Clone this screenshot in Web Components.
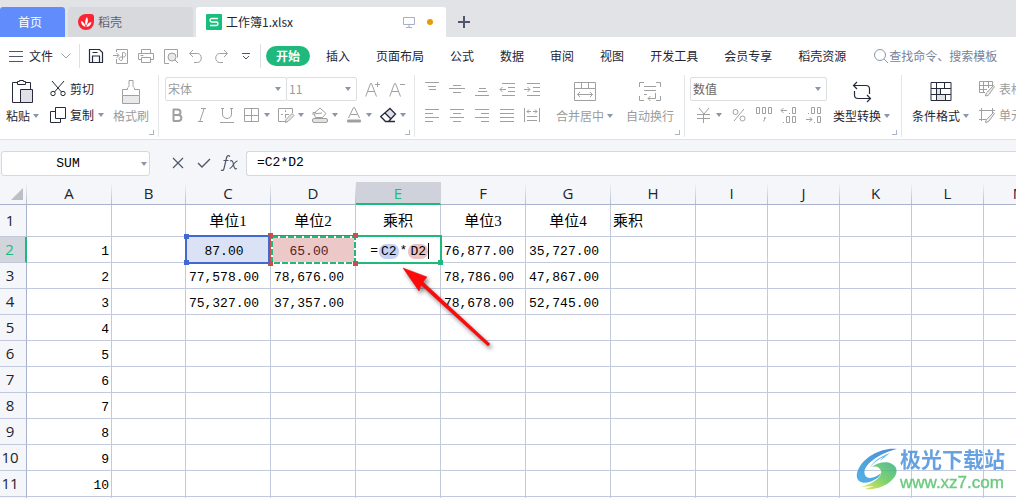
<!DOCTYPE html>
<html lang="zh-CN">
<head>
<meta charset="utf-8">
<title>工作簿1.xlsx</title>
<style>
html, body { margin: 0; height: 100%; }
body { font: 12px/16px "Noto Sans CJK SC", sans-serif; color: #1f2633; background: #fff; overflow: hidden; }
spreadsheet-app { height: 100%; }
</style>
</head>
<body>
<spreadsheet-app></spreadsheet-app>

<script>
const GREY = '#a0a0a0', DARK = '#252b3b', MID = '#4d566b';
const line = (d, c = GREY, w = 1) => `<path d="${d}" fill="none" stroke="${c}" stroke-width="${w}"/>`;
/* name: [width, height, markup] */
const ICONS = {
  menu: [16, 16, line('M1 3.5h14M1 8.5h14M1 13.5h14', MID)],
  chevron: [10, 8, line('M.5 1.5l4.500 4.500 4.500-4.500', '#9aa0a8')],
  caret: [6, 4, '<path d="M0 0h6L3 4z" fill="#8a96ab"/>'],
  save: [16, 16, line('M1.500 1.500h10l3 3v10h-13zM4.500 14v-6h7v6M4.500 4.500h5', DARK, 1.2)],
  exportPdf: [16, 16, line('M3.500 4V1.500h11v14h-11V11M0 7.500h5.500M3.500 5l2.500 2.500L3.500 10M9.500 10V4.500h1c3 0 3 4.500 0 4.500H8c-2.500 0-2.500 3.500 0 3.500 1.500 0 1.500-1 1.500-2.500')],
  print: [16, 16, line('M3.500 5V1.500h9V5M3.500 11.500h-3v-6h15v6h-3M3.500 9.500h9v5h-9zM2.500 7.500h3')],
  preview: [16, 16, line('M6 15.500H1.500v-14h13v8') + '<circle cx="9" cy="9" r="4" fill="#e8e9eb" stroke="#a0a0a0"/>' + line('M12 12l3 3')],
  undo: [16, 16, line('M5 2L1.500 5.500 5 9M2 5.500h7.500c5 0 5 9 0 9H6')],
  redo: [16, 16, line('M11 2l3.500 3.500L11 9M14 5.500H6.500c-5 0-5 9 0 9H10')],
  more: [16, 16, line('M4 5.500h8M5 8l3 3 3-3', MID)],
  search: [16, 16, '<circle cx="7" cy="7" r="5.500" fill="none" stroke="#8d96aa"/>' + line('M11 11l4 4', '#8d96aa')],
  monitor: [12, 12, line('M.5 1.500h11v7H.5zM6 9v2M3 11.500h6', '#a5b0c8')],
  plus: [12, 12, line('M6 0v12M0 6h12', MID, 2)],
  docer: [16, 16, '<path d="M8 0h5a3 3 0 0 1 3 3v5a8 8 0 1 1-8-8z" fill="#fb2433"/><path d="M8 12C6.500 8.500 7 5.500 9 3c1.500 3 1 6-1 9zM7.500 13C4.500 12 3 10 3 7c2.500.8 4.200 3 4.500 6zM8.500 13c.7-3 2.200-4.500 5-5-.5 3-2.200 4.500-5 5z" fill="#fff"/>'],
  sheet: [16, 16, '<rect width="16" height="16" rx="1" fill="#18bf7c"/><path d="M12 4.500H5.500c-2 0-2 3.500 0 3.500h5c2 0 2 3.500 0 3.500H4" fill="none" stroke="#fff" stroke-width="1.300"/>'],
  paste: [22, 24, line('M5 2.500H.5v20H9M14 2.500h4.500V10', DARK) + line('M5.500 4.500v-3h2V.5h4v1h2v3z', DARK) + '<path d="M8.500 9.500h12v13h-12z" fill="#dfe1e6" stroke="#252b3b"/>'],
  cut: [16, 16, line('M2 0l9.500 11M14 0L4.500 11', DARK) + '<circle cx="3" cy="12.500" r="2.200" fill="none" stroke="#252b3b"/><circle cx="13" cy="12.500" r="2.200" fill="none" stroke="#252b3b"/>'],
  copy: [16, 16, line('M5.500 11.500v-11h10v11z', DARK) + line('M5 4.500H.5v11h10V12', DARK)],
  painter: [18, 24, line('M.5 15V9.500h5V8c1.500-1 1.500-2 1.500-3.500V.5h4v4c0 1.500 0 2.500 1.500 3.500v1.500h5V15') + '<path d="M.5 15.500h17v8H.5z" fill="#e9e9ea" stroke="#a0a0a0"/>'],
  fontUp: [16, 16, line('M.7 15.500L5.500 2.500h1l5 13M2.500 10.500h7') + line('M12.500 1v5M10 3.500h5')],
  fontDown: [16, 16, line('M.7 15.500L5.500 2.500h1l5 13M2.500 10.500h7') + line('M11 3.500h5')],
  bold: [16, 16, line('M4 2.500h4.500c4 0 4 5.500 0 5.500H4m0 0h5c4.500 0 4.500 6 0 6H4M4.500 2v12', GREY, 2)],
  italic: [16, 16, line('M7 1.500h5M4 14.500h5M10 2L6 14')],
  underline: [16, 16, line('M3.500 1v6c0 6 9 6 9 0V1M1 15.500h14M2 1.500h3M11 1.500h3')],
  borders: [16, 16, line('M.5 1.500h14v13H.5zM7.500 2v12M1 8.500h13')],
  borderPen: [16, 16, line('M8 14.500H.5v-13h14V6M7.500 3v2M7.500 7v4M3 7.500h2M7 7.500h4') + '<path d="M14 6.500l2 2-6 6-2.500 1 .5-3z" fill="#e8e8e8" stroke="#a0a0a0"/>'],
  fill: [16, 16, line('M3 5.500L8 1l6 5.500-3.500 4h-7L2 7l8-1M1 8V5.500h3') + '<rect x=".5" y="11.500" width="15" height="4" rx="1.500" fill="#e2e2e2" stroke="#a0a0a0"/>'],
  fontColor: [16, 16, line('M2.500 11L7.500 .5h1L13.500 11M4.500 7.500h7') + '<rect x="1" y="12.500" width="14" height="3" rx="1" fill="#a0a0a0"/>'],
  eraser: [16, 16, '<path d="M10 1.500l5.500 5.500-5 5-5.500-5.500z" fill="#dfe1e8"/>' + line('M10 1.500l5.500 5.500-7 7.500h-3L.7 9.500zM5 6l5.500 5.500M6 14.500h9', DARK, 1.3)],
  alignTop: [16, 16, line('M1 1.500h14M4 5.500h8M5 8.500h7')],
  alignMid: [16, 16, line('M4 4.500h8M0 7.500h16M4 11.500h8')],
  alignBottom: [16, 16, line('M5 7.500h7M4 10.500h9M1 14.500h14')],
  outdent: [16, 16, line('M3 2.500h13M9 6.500h7M9 10.500h7M3 14.500h13M1 8.500h6M3.500 6L1 8.500 3.500 11')],
  indent: [16, 16, line('M3 2.500h13M9 6.500h7M9 10.500h7M3 14.500h13M0 8.500h6M3.500 6L6 8.500 3.500 11')],
  left: [16, 16, line('M1 2.500h14M1 6.500h8M1 10.500h14M1 14.500h8')],
  center: [16, 16, line('M1 2.500h14M4 6.500h8M1 10.500h14M4 14.500h8')],
  right: [16, 16, line('M1 2.500h14M7 6.500h8M1 10.500h14M7 14.500h8')],
  justify: [16, 16, line('M1 2.500h14M1 6.500h14M1 10.500h14M1 14.500h14')],
  distribute: [16, 16, line('M.5 1v14M15.500 1v14M3 9.500h10M3 13.500h10M3 4.500h4M9 4.500h4M5 2.500L3 4.500l2 2M11 2.500l2 2-2 2')],
  merge: [22, 20, line('M.5.500h21v18H.5zM0 6.500h22M7.500 1v5M14.500 1v5M3.500 12.500h15M6 10l-2.500 2.500L6 15M16 10l2.500 2.500L16 15')],
  wrap: [22, 20, line('M5 .5H.5V5M17 .5h4.500V5M5 18.500H.5V14M17 18.500h4.500V14M5 4.500h12M5 8.500h12M5 12.500h3M16.500 11v5.500H9M11.500 14L9 16.500l2.500 2.500')],
  yen: [16, 16, line('M3 1l5 6 5-6M1 7.500h13M1 11.500h13M7.500 7v9')],
  percent: [16, 16, line('M13 2L3 14') + '<circle cx="4.500" cy="5" r="2.500" fill="none" stroke="#a0a0a0"/><circle cx="11.500" cy="11.500" r="2.500" fill="none" stroke="#a0a0a0"/>'],
  thousands: [16, 16, line('M.5.500h3v6h-3zM6.500.500h3v6h-3zM12.500.500h3v6h-3zM8.500 10.500v2l-1 2M8 11h2')],
  decMore: [16, 16, line('M0 3.500h6M2.500 1L0 3.500 2.500 6M8 6.500h1M11.500.500h3v6h-3zM2 15.500h1M5.500 9.500h3v6h-3zM11.500 9.500h3v6h-3z')],
  decLess: [16, 16, line('M2 6.500h1M5.500.500h3v6h-3zM11.500.500h3v6h-3zM0 12.500h6M3.500 10l2.500 2.500L3.500 15M8 15.500h1M11.500 9.500h3v6h-3z')],
  convert: [20, 22, line('M5 1L1.500 4.500 5 8M2 4.500h12q3.500 0 3.500 3.500v5M15 14l3.500 3.500L15 21M18 17.500H6q-3.500 0-3.500-3.500V10', DARK, 1.2)],
  condFormat: [22, 20, '<path d="M6 7h4v6H6zM6 13h9v6H6z" fill="#dfe1e6"/>' + line('M1 .5h20v18H1zM1 6.500h20M1 12.500h20M6.500 .5v18M14.500 .5v6M10.500 6.500v6M15.500 12.500v6', DARK)],
  tableStyle: [16, 16, line('M6 11.500H.5v-11h13V5M1 4.500h12M1 8.500h7M4.500 1v10M9.500 1v6') + '<path d="M14.500 4.500l1 1-5.500 8c-1 1.500-3 1.500-4 1 1.500-.5.500-2.500 2.500-3.500z" fill="#eee" stroke="#a0a0a0"/>'],
  cellStyle: [16, 16, line('M0 3.500h16M2.500 1v13M13.500 1v5M0 12.500h7') + '<path d="M14.500 5.500l1 1-5.500 7.500c-1 1.500-3 1.500-4 1 1.500-.5.500-2.500 2.500-3.500z" fill="#eee" stroke="#a0a0a0"/>'],
  cancel: [14, 14, line('M2 2l10 10M12 2L2 12', MID, 1.2)],
  accept: [14, 14, line('M1 7l4 4 8-8', MID, 1.4)],
  fx: [18, 18, line('M9 2.500C7 .5 6 2 5.500 4L3 14.500C2.500 16.500 1.500 17 0 16M2.500 6.500h5M9 7c2-1 3 0 3.500 3.500S14 15.500 16 14.500M16.500 7C13.500 7 11 14.500 8.500 14.500', MID, 1.2)],
};

function define(name, css, html, setup) {
  const tpl = document.createElement('template');
  tpl.innerHTML = `<style>*{box-sizing:border-box}${css}</style>${html}`;
  customElements.define(name, class extends HTMLElement {
    connectedCallback() {
      if (this.shadowRoot) return;
      this.attachShadow({ mode: 'open' }).append(tpl.content.cloneNode(true));
      if (setup) setup(this, this.shadowRoot);
    }
  });
}

const BUTTON = 'button{display:flex;align-items:center;margin:0;padding:0;border:0;background:none;font:inherit;color:inherit;white-space:nowrap}';

define('ui-icon', ':host{display:block;flex:none}svg{display:block;overflow:visible}', '', (el, root) => {
  const [w, h, body] = ICONS[el.getAttribute('name')];
  root.innerHTML += `<svg width="${w}" height="${h}" viewBox="0 0 ${w} ${h}" aria-hidden="true">${body}</svg>`;
});

/* small button: icon, optional text, optional drop-down arrow */
define('tool-button', `:host{display:block;flex:none}${BUTTON}button{gap:4px;height:16px}`,
  '<button type="button"><slot></slot></button>', (el, root) => {
    const b = root.querySelector('button');
    b.setAttribute('aria-label', el.getAttribute('label') || el.textContent);
    b.insertAdjacentHTML('afterbegin', `<ui-icon name="${el.getAttribute('icon')}"></ui-icon>`);
    if (el.hasAttribute('drop')) b.insertAdjacentHTML('beforeend', '<ui-icon name="caret"></ui-icon>');
  });

/* tall button: icon above its caption */
define('big-button', `:host{display:block;flex:none;padding-top:3px}${BUTTON}
  button{flex-direction:column;gap:4px}.pic{display:flex;height:24px;align-items:center}
  .cap{display:flex;align-items:center;gap:3px}`,
  '<button type="button"><span class="pic"></span><span class="cap"><slot></slot></span></button>', (el, root) => {
    root.querySelector('.pic').innerHTML = `<ui-icon name="${el.getAttribute('icon')}"></ui-icon>`;
    if (el.hasAttribute('drop')) root.querySelector('.cap').insertAdjacentHTML('beforeend', '<ui-icon name="caret"></ui-icon>');
  });

define('drop-select', `:host{display:block;position:relative;flex:none}
  select{appearance:none;display:block;width:100%;height:24px;margin:0;padding:0 16px 0 2px;border:1px solid #dcdee2;border-radius:2px;background:#fff;font:inherit;color:inherit}
  ui-icon{position:absolute;right:6px;top:10px;pointer-events:none}`,
  '<select><option></option></select><ui-icon name="caret"></ui-icon>', (el, root) => {
    root.querySelector('select').setAttribute('aria-label', el.getAttribute('label'));
    root.querySelector('option').textContent = el.getAttribute('value');
  });

define('doc-tab', `:host{display:block;flex:none;height:30px;background:#d7d9dd;border-radius:3px 3px 0 0;color:#5a6274}
  :host([kind=home]){background:#608dfb;color:#fff}:host([kind=active]){background:#fff;color:#1f2633}
  ${BUTTON}button{width:100%;height:30px;gap:4px;padding:0 10px}:host([kind=home]) button{justify-content:center;padding:0 5px 0 0}
  ::slotted(.end){margin-left:auto}::slotted(.dot){width:6px;height:6px;margin:0 3px 0 8px;border-radius:3px;background:#e69a0c}`,
  '<button type="button"><slot></slot></button>');

define('tab-bar', `:host{display:flex;align-items:flex-end;gap:3px;height:37px;background:#e2e3e7}
  .home{width:65px}.docer{width:125px}.book{width:250px}${BUTTON}.new{width:30px;height:30px;justify-content:center}`,
  `<doc-tab class="home" kind="home">首页</doc-tab>
   <doc-tab class="docer"><ui-icon name="docer"></ui-icon><span>稻壳</span></doc-tab>
   <doc-tab class="book" kind="active"><ui-icon name="sheet"></ui-icon><span>工作簿1.xlsx</span><ui-icon class="end" name="monitor"></ui-icon><span class="dot"></span></doc-tab>
   <button class="new" type="button" aria-label="新建"><ui-icon name="plus"></ui-icon></button>`);

define('menu-bar', `:host{display:flex;align-items:center;height:38px;padding-left:8px}
  ${BUTTON}.file{gap:5px;margin-right:8px}.file ui-icon:last-child{margin-left:3px}
  .quick{display:flex;align-items:center;gap:9px;height:24px;padding:0 6px 0 8px;border-left:1px solid #dddfe3;border-right:1px solid #dddfe3;margin-right:5px}
  nav{display:flex;align-items:center;gap:26px}nav a{color:inherit;text-decoration:none;white-space:nowrap}
  nav a.on{background:#20b97d;color:#fff;font-weight:700;border-radius:10px;line-height:20px;padding:0 10px;margin-right:-10px}
  label{display:flex;align-items:center;flex:1;min-width:0;margin-left:27px;color:#78829a}
  input{flex:1;min-width:0;border:0;padding:0;background:none;font:inherit;color:inherit}input::placeholder{color:#78829a;opacity:1}`,
  `<button class="file" type="button"><ui-icon name="menu"></ui-icon>文件<ui-icon name="chevron"></ui-icon></button>
   <div class="quick"><tool-button icon="save" label="保存"></tool-button><tool-button icon="exportPdf" label="输出为PDF"></tool-button><tool-button icon="print" label="打印"></tool-button><tool-button icon="preview" label="打印预览"></tool-button><tool-button icon="undo" label="撤销"></tool-button><tool-button icon="redo" label="恢复"></tool-button><tool-button icon="more" label="更多"></tool-button></div>
   <nav><a class="on" href="#start">开始</a><a href="#insert">插入</a><a href="#layout">页面布局</a><a href="#formula">公式</a><a href="#data">数据</a><a href="#review">审阅</a><a href="#view">视图</a><a href="#dev">开发工具</a><a href="#vip">会员专享</a><a href="#docer">稻壳资源</a></nav>
   <label><ui-icon name="search"></ui-icon><input type="text" aria-label="查找命令" placeholder="查找命令、搜索模板"></label>`);

define('ribbon-group', `:host{display:flex;position:relative;flex:none;height:62px;padding-top:2px;border-right:1px solid #e4e6ea}
  :host([last]){border:0}.corner{position:absolute;right:4px;bottom:2px;width:5px;height:5px;border:solid #a9b4cd;border-width:0 1px 1px 0}:host([last]) .corner{display:none}`,
  '<slot></slot><span class="corner"></span>');

define('tool-ribbon', `:host{display:flex;height:64px;overflow:hidden}
  .muted{color:#9b9b9b}.rows{display:flex;flex-direction:column;gap:2px}.row{display:flex;align-items:center;gap:9px;height:24px}
  .drops{gap:8px}.clip{padding-left:6px}.clip .rows{margin:0 9px 0 11px}
  .font{padding-left:6px}.fonts{gap:0}.name{width:122px}.size{width:71px;margin-left:-1px}.up{margin:0 8px}.style{padding-left:4px}
  .align{padding-left:9px}.align .rows{margin-right:16px}.wrapbtn{margin-left:13px}
  .num{padding-left:5px}.num .rows{margin-right:6px}.value{width:137px;color:#666}.marks{padding-left:6px}
  .cond{padding-left:10px}.cond .rows{margin-left:10px}
  .g1{width:159px}.g2{width:256px}.g3{width:270px}.g4{width:217px}.g5{flex:1 0 auto}`,
  `<ribbon-group class="g1 clip"><big-button icon="paste" drop>粘贴</big-button>
     <div class="rows"><div class="row"><tool-button icon="cut">剪切</tool-button></div><div class="row"><tool-button icon="copy" drop>复制</tool-button></div></div>
     <big-button class="muted" icon="painter">格式刷</big-button></ribbon-group>
   <ribbon-group class="g2 font"><div class="rows muted">
     <div class="row fonts"><drop-select class="name" label="字体" value="宋体"></drop-select><drop-select class="size" label="字号" value="11"></drop-select><tool-button class="up" icon="fontUp" label="增大字号"></tool-button><tool-button icon="fontDown" label="减小字号"></tool-button></div>
     <div class="row style"><tool-button icon="bold" label="加粗"></tool-button><tool-button icon="italic" label="倾斜"></tool-button><tool-button icon="underline" label="下划线"></tool-button>
       <div class="row drops"><tool-button icon="borders" label="边框" drop></tool-button><tool-button icon="borderPen" label="绘图边框" drop></tool-button><tool-button icon="fill" label="填充颜色" drop></tool-button><tool-button icon="fontColor" label="字体颜色" drop></tool-button><tool-button icon="eraser" label="清除" drop></tool-button></div></div></div></ribbon-group>
   <ribbon-group class="g3 align muted"><div class="rows">
     <div class="row"><tool-button icon="alignTop" label="顶端对齐"></tool-button><tool-button icon="alignMid" label="垂直居中"></tool-button><tool-button icon="alignBottom" label="底端对齐"></tool-button><tool-button icon="outdent" label="减少缩进"></tool-button><tool-button icon="indent" label="增加缩进"></tool-button></div>
     <div class="row"><tool-button icon="left" label="左对齐"></tool-button><tool-button icon="center" label="居中"></tool-button><tool-button icon="right" label="右对齐"></tool-button><tool-button icon="justify" label="两端对齐"></tool-button><tool-button icon="distribute" label="分散对齐"></tool-button></div></div>
     <big-button icon="merge" drop>合并居中</big-button><big-button class="wrapbtn" icon="wrap">自动换行</big-button></ribbon-group>
   <ribbon-group class="g4 num"><div class="rows">
     <div class="row"><drop-select class="value" label="数字格式" value="数值"></drop-select></div>
     <div class="row marks"><tool-button icon="yen" label="货币" drop></tool-button><tool-button icon="percent" label="百分比"></tool-button><tool-button icon="thousands" label="千位分隔"></tool-button><tool-button icon="decMore" label="增加小数位"></tool-button><tool-button icon="decLess" label="减少小数位"></tool-button></div></div>
     <big-button icon="convert" drop>类型转换</big-button></ribbon-group>
   <ribbon-group class="g5 cond" last><big-button icon="condFormat" drop>条件格式</big-button>
     <div class="rows muted"><div class="row"><tool-button icon="tableStyle">表格样式</tool-button></div><div class="row"><tool-button icon="cellStyle">单元格样式</tool-button></div></div></ribbon-group>`);

define('formula-bar', `:host{display:flex;align-items:center;height:43px;padding:4px 0 0 1px;background:#f5f6f9;border-top:1px solid #dfe1e4;font-family:"Liberation Mono",monospace;font-size:13px;color:#000}
  .name{position:relative;flex:none;width:149px}input{display:block;width:100%;height:25px;margin:0;border:1px solid #d5d8de;border-radius:3px;background:#fff;font:inherit;color:inherit}
  .name input{padding:0 15px 0 0;text-align:center}.name ui-icon{position:absolute;right:3px;top:11px}
  .acts{display:flex;align-items:center;gap:12px;margin:0 7px 0 21px}.acts tool-button:last-child{margin-left:-2px}.formula{flex:1;min-width:0}.formula input{padding:0 0 2px 10px;border-right:0;border-radius:3px 0 0 3px}`,
  `<div class="name"><input type="text" value="SUM" aria-label="名称框"><ui-icon name="caret"></ui-icon></div>
   <div class="acts"><tool-button icon="cancel" label="取消"></tool-button><tool-button icon="accept" label="输入"></tool-button><tool-button icon="fx" label="插入函数"></tool-button></div>
   <div class="formula"><input type="text" value="=C2*D2" aria-label="编辑栏"></div>`);

/* outline that sits over a cell's own grid lines */
define('cell-frame', `:host{position:absolute;pointer-events:none;z-index:1}
  i{position:absolute;width:5px;height:5px;background:var(--c)}svg{position:absolute;inset:0;width:100%;height:100%;overflow:visible}
  :host([kind=blue]){--c:#4169d0;inset:-2px 0 -2px -1px;border:2px solid var(--c);z-index:3}
  :host([kind=red]){--c:#c8504b;inset:-2px -1px -2px -1px;border:1px solid var(--c);z-index:2}
  :host([kind=green]){--c:#21b87c;inset:-2px -2px -2px -1px;border:2px solid var(--c);border-left-width:1px;z-index:1}
  .tl{left:-3px;top:-3px}.tr{right:-3px;top:-3px}.bl{left:-3px;bottom:-3px}.br{right:-3px;bottom:-3px}
  :host([kind=blue]) .tr,:host([kind=blue]) .br,:host([kind=green]) .tl,:host([kind=green]) .tr,:host([kind=green]) .bl,:host(:not([kind=red])) svg{display:none}
  rect{width:calc(100% - 1px);height:calc(100% - 1px);fill:none;stroke:#fff;stroke-width:2px}rect+rect{stroke:#21b87c;stroke-dasharray:6px 2px}`,
  `<svg aria-hidden="true"><rect x="1" y="1"/><rect x="1" y="1"/></svg>
   <i class="tl"></i><i class="tr"></i><i class="bl"></i><i class="br"></i>`);

const COLUMNS = { A: 85, B: 74, C: 85, D: 85, E: 85, F: 85, G: 85, H: 85, I: 72, J: 72, K: 72, L: 72, M: 72 };
const CELLS = {
  C1: '单位1', D1: '单位2', E1: '乘积', F1: '单位3', G1: '单位4', H1: '乘积',
  C2: '87.00', D2: '65.00', F2: '76,877.00', G2: '35,727.00',
  C3: '77,578.00', D3: '78,676.00', F3: '78,786.00', G3: '47,867.00',
  C4: '75,327.00', D4: '37,357.00', F4: '78,678.00', G4: '52,745.00',
};
for (let r = 2; r <= 11; r++) CELLS['A' + r] = String(r - 1);

define('sheet-grid', `:host{display:block;position:relative;flex:1;min-height:0;overflow:hidden;background:#fff;color:#000}
  table{table-layout:fixed;border-collapse:separate;border-spacing:0;width:1056px}
  th,td{padding:0;border:solid #c3c9dd;border-width:0 1px 1px 0;line-height:20px;white-space:nowrap}
  th{background:#f5f6f9;font:15px/20px "Open Sans",sans-serif;color:#1c2433}
  thead th{height:23px;border-right-color:transparent;border-bottom-color:#a9b2cc;background:linear-gradient(#f5f6f9,#b3bbd1) right/1px 100% no-repeat border-box,#f5f6f9 border-box}
  thead th.on{background:#cfd2da border-box;color:#20b97d;border-bottom:2px solid #20b97d}
  tbody th{height:26px;padding:0 6px 2px 0;border-right-color:#a9b2cc;text-align:center}tbody th.on{background:#d2d5dc;color:#20b97d;border-right:2px solid #20b97d}
  tbody tr:first-child th,tbody tr:first-child td{height:32px}
  td{position:relative;padding:4px 8px 0 0;font:13px/20px "Liberation Mono",monospace;text-align:center}
  td.t{padding:0;font:15px/20px "Liberation Serif","Noto Sans CJK SC",serif}td.l{text-align:left;padding-left:2px}td.a{text-align:right;padding-right:2px}
  #C2{background:#dce2f5}#D2{background:#edc8c9;color:#521d1d}
  .all{display:block;margin:2px 0 0 11px}
  #E2{padding:3px 11px 0 0;text-align:right}mark{display:inline-block;line-height:15px;padding:0 2px;border-radius:7px;background:#c5d0f2;color:inherit}mark+mark{background:#edc3c3}
  .edit{display:inline-flex;align-items:center;gap:1px}.edit b{width:1px;height:16px;background:#000;margin-left:-1px}
  .arrow{position:absolute;left:396px;top:80px;z-index:5;overflow:visible;filter:drop-shadow(2px 3px 2px #0007)}`,
  `<table aria-label="工作表"><colgroup></colgroup><thead><tr></tr></thead><tbody></tbody></table>
   <svg class="arrow" width="100" height="90" viewBox="396 262 100 90" aria-hidden="true"><path d="M403 268l24 9-4 5 67 62-2 2-67-61-2 6z" fill="#ff0a0a" stroke="#e00808" stroke-width=".5"/></svg>`,
  (el, root) => {
    const names = Object.keys(COLUMNS);
    root.querySelector('colgroup').innerHTML = '<col style="width:27px">' + names.map(n => `<col style="width:${COLUMNS[n]}px">`).join('');
    root.querySelector('thead tr').innerHTML = '<th aria-label="全选"><svg class="all" width="12" height="12" aria-hidden="true"><path d="M12 0v12H0z" fill="#bcbfc5"/></svg></th>' +
      names.map(n => `<th scope="col"${n === 'E' ? ' class="on"' : ''}>${n}</th>`).join('');
    let html = '';
    for (let r = 1; r <= 12; r++) {
      html += `<tr><th scope="row"${r === 2 ? ' class="on"' : ''}>${r < 12 ? r : ''}</th>` + names.map(n => {
        const cls = (r === 1 ? 't ' : '') + (n === 'H' ? 'l' : n === 'A' ? 'a' : '');
        return `<td id="${n + r}" class="${cls}">${CELLS[n + r] || ''}</td>`;
      }).join('') + '</tr>';
    }
    root.querySelector('tbody').innerHTML = html;
    root.getElementById('C2').insertAdjacentHTML('beforeend', '<cell-frame kind="blue"></cell-frame>');
    root.getElementById('D2').insertAdjacentHTML('beforeend', '<cell-frame kind="red"></cell-frame>');
    root.getElementById('E2').innerHTML = '<span class="edit">=<mark>C2</mark>*<mark>D2</mark><b></b></span><cell-frame kind="green"></cell-frame>';
  });

define('site-badge', `:host{position:absolute;right:11px;bottom:6px;z-index:6;display:flex;align-items:center;gap:2px;opacity:.85}
  p{margin:0;white-space:nowrap;font:700 21px/24px "Noto Sans CJK SC",sans-serif;color:#4c91dc}p+p{margin-top:4px;font:17px/18px "Liberation Sans",sans-serif;color:#55c06b;-webkit-text-stroke:.4px #55c06b}svg{display:block}`,
  `<svg width="42" height="42" viewBox="0 0 42 42" aria-hidden="true"><defs><linearGradient id="b" x1="0" y1="1" x2="1" y2="0"><stop stop-color="#35a5e0"/><stop offset="1" stop-color="#2c78cf"/></linearGradient><linearGradient id="g" x1="0" y1="1" x2="1" y2="0"><stop stop-color="#e8e832"/><stop offset=".5" stop-color="#66c95b"/><stop offset="1" stop-color="#35ae86"/></linearGradient></defs>
   <path d="M41 1C27-1 8 8 2 22c-5 12 6 16 16 10 4-2 6-4 7-7-5 5-14 7-16 2C5 18 23 5 41 1z" fill="url(#b)"/><path d="M34 5C25 8 17 13 14 20c3-5 8-8 13-11l-3 4z" fill="#5caee8"/><path d="M16 19c7-6 20-7 24 1 4 10-14 23-31 21l9-3-14 1c14-3 25-12 20-18-2-3-5-3-8-2z" fill="url(#g)"/></svg>
   <div><p>极光下载站</p><p>www.xz7.com</p></div>`);

define('spreadsheet-app', ':host{display:flex;flex-direction:column;position:relative;overflow:hidden}tab-bar,menu-bar,tool-ribbon,formula-bar{flex:none}',
  '<tab-bar></tab-bar><menu-bar></menu-bar><tool-ribbon></tool-ribbon><formula-bar></formula-bar><sheet-grid></sheet-grid><site-badge></site-badge>');
</script>
</body>
</html>
